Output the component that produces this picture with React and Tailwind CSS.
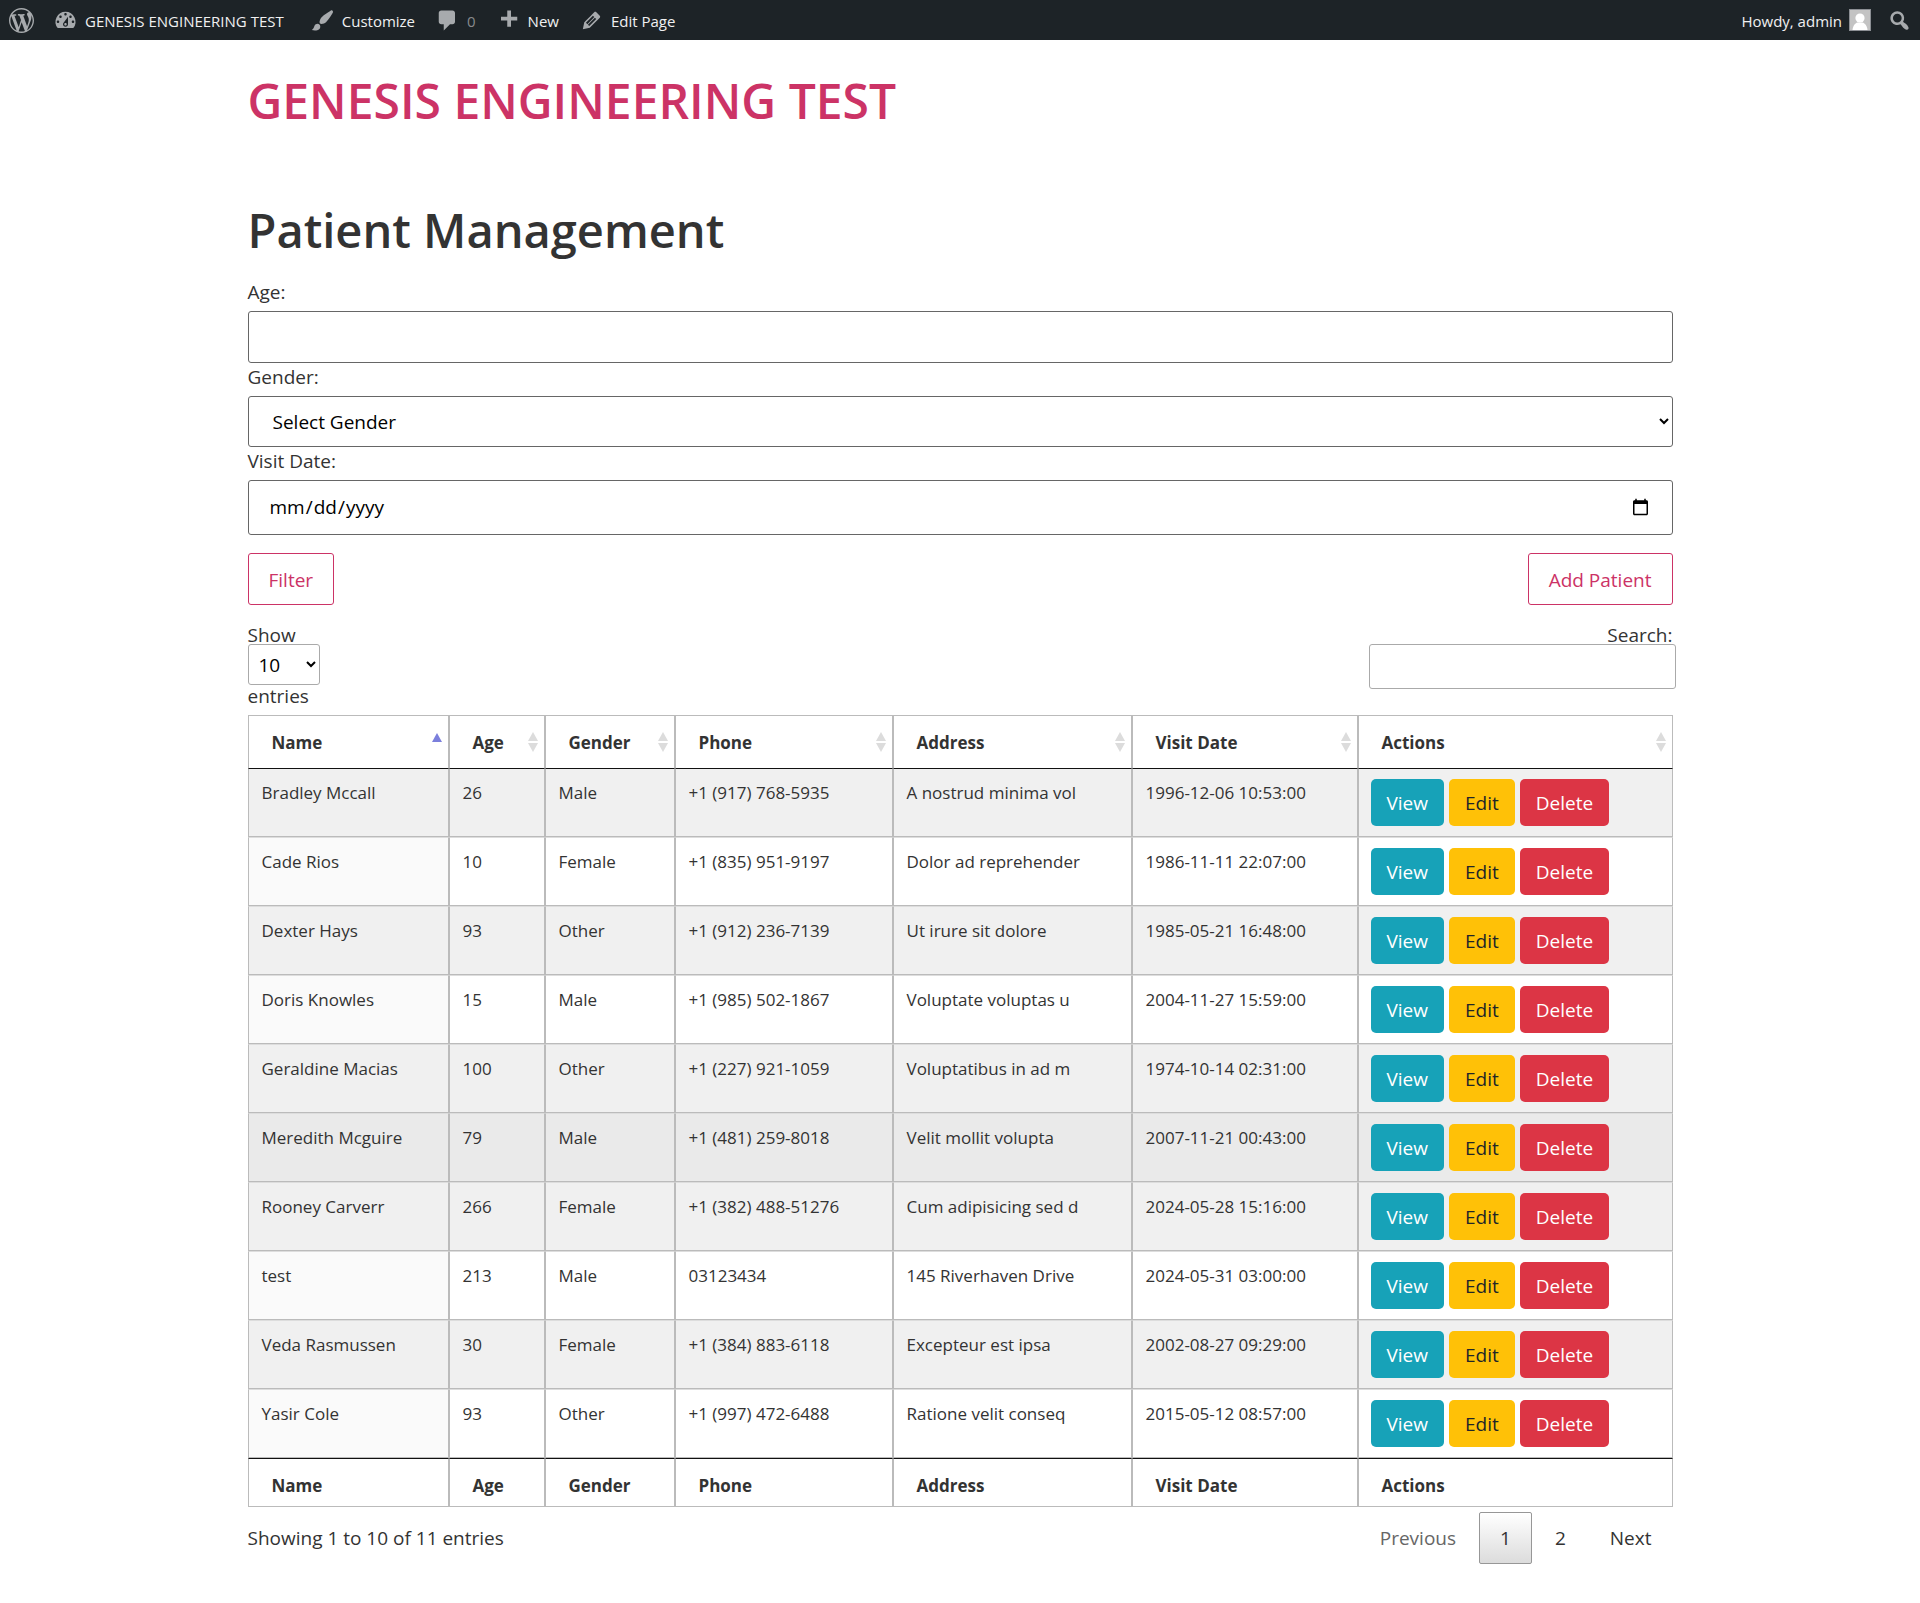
const ICONS = {
  wordpress:
    "M20 10c0-5.51-4.49-10-10-10C4.48 0 0 4.49 0 10c0 5.52 4.48 10 10 10 5.51 0 10-4.48 10-10zM7.78 15.37L4.37 6.22c.55-.02 1.17-.08 1.17-.08.5-.06.44-1.13-.06-1.11 0 0-1.45.11-2.37.11-.18 0-.37 0-.58-.01C4.12 2.69 6.87 1.11 10 1.11c2.33 0 4.45.87 6.05 2.34-.68-.11-1.65.39-1.65 1.58 0 .74.45 1.36.9 2.1.35.61.55 1.36.55 2.46 0 1.49-1.4 5-1.4 5l-3.03-8.37c.54-.02.82-.17.82-.17.5-.05.44-1.25-.06-1.22 0 0-1.44.12-2.38.12-.87 0-2.33-.12-2.33-.12-.5-.03-.56 1.2-.06 1.22l.92.08 1.26 3.41zM17.41 10c.24-.64.74-1.87.43-4.25.7 1.29 1.05 2.71 1.05 4.25 0 3.29-1.73 6.24-4.4 7.78.97-2.59 1.94-5.2 2.92-7.78zM6.1 18.09C3.12 16.65 1.11 13.53 1.11 10c0-1.3.23-2.48.72-3.59C3.25 10.3 4.67 14.2 6.1 18.09zm4.03-6.63l2.58 6.98c-.86.29-1.76.45-2.71.45-.79 0-1.57-.11-2.29-.33.81-2.38 1.62-4.74 2.42-7.1z",
  dashboard:
    "M3.76 16h12.48A7.998 7.998 0 0 0 10 3a7.998 7.998 0 0 0-6.24 13zM10 4c.55 0 1 .45 1 1s-.45 1-1 1-1-.45-1-1 .45-1 1-1zM6 6c.55 0 1 .45 1 1s-.45 1-1 1-1-.45-1-1 .45-1 1-1zm8 0c.55 0 1 .45 1 1s-.45 1-1 1-1-.45-1-1 .45-1 1-1zm-5.37 5.55L12 7v6c0 1.1-.9 2-2 2s-2-.9-2-2c0-.57.24-1.08.63-1.45zM4 10c.55 0 1 .45 1 1s-.45 1-1 1-1-.45-1-1 .45-1 1-1zm12 0c.55 0 1 .45 1 1s-.45 1-1 1-1-.45-1-1 .45-1 1-1zm-5 3c0-.55-.45-1-1-1s-1 .45-1 1 .45 1 1 1 1-.45 1-1z",
  brush:
    "M18.33 3.57s.27-.8-.31-1.36c-.53-.52-1.22-.24-1.22-.24-.61.3-5.76 3.47-7.67 5.57-.86.96-2.06 3.79-1.09 4.82.92.98 3.96-.17 4.79-1 2.06-2.06 5.21-7.17 5.5-7.79zM1.4 17.65c2.37-1.56 1.46-3.41 3.23-4.64.93-.65 2.22-.62 3.08.29.63.67.8 2.57-.16 3.46-1.57 1.45-4 1.55-6.15.89z",
  comment:
    "M5 2h9c1.1 0 2 .9 2 2v7c0 1.1-.9 2-2 2h-2l-5 5v-5H5c-1.1 0-2-.9-2-2V4c0-1.1.9-2 2-2z",
  plus: "M17 7v3h-5v5H9v-5H4V7h5V2h3v5h5z",
  edit: "M13.89 3.39l2.71 2.72c.46.46.42 1.24.03 1.64l-8.01 8.02-5.56 1.16 1.16-5.58s7.6-7.63 7.99-8.03c.39-.39 1.22-.39 1.68.07zm-2.73 2.79l-5.59 5.61 1.11 1.11 5.54-5.65zm-2.97 8.23l5.58-5.6-1.07-1.08-5.59 5.6z",
  search:
    "M12.14 4.18c1.87 1.87 2.11 4.75.72 6.89.12.1.22.21.36.31.2.16.47.36.81.59.34.24.56.39.66.47.42.31.73.57.94.78.32.32.6.65.84 1 .25.35.44.69.59 1.04.14.35.21.68.18 1-.02.32-.14.59-.36.81s-.49.34-.81.36c-.31.02-.65-.04-.99-.19-.35-.14-.7-.34-1.04-.59-.35-.24-.68-.52-1-.84-.21-.21-.47-.52-.77-.93-.1-.13-.25-.35-.47-.66-.22-.32-.4-.57-.56-.78-.16-.2-.29-.35-.44-.5-2.07 1.09-4.69.76-6.44-.98-2.14-2.15-2.14-5.64 0-7.78 2.15-2.15 5.63-2.15 7.78 0zm-1.41 6.36c1.36-1.37 1.36-3.58 0-4.95-1.37-1.37-3.59-1.37-4.95 0-1.37 1.37-1.37 3.58 0 4.95 1.36 1.37 3.58 1.37 4.95 0z",
};

const COLUMNS = ["Name", "Age", "Gender", "Phone", "Address", "Visit Date", "Actions"];

const PATIENTS = [
  ["Bradley Mccall", "26", "Male", "+1 (917) 768-5935", "A nostrud minima vol", "1996-12-06 10:53:00"],
  ["Cade Rios", "10", "Female", "+1 (835) 951-9197", "Dolor ad reprehender", "1986-11-11 22:07:00"],
  ["Dexter Hays", "93", "Other", "+1 (912) 236-7139", "Ut irure sit dolore", "1985-05-21 16:48:00"],
  ["Doris Knowles", "15", "Male", "+1 (985) 502-1867", "Voluptate voluptas u", "2004-11-27 15:59:00"],
  ["Geraldine Macias", "100", "Other", "+1 (227) 921-1059", "Voluptatibus in ad m", "1974-10-14 02:31:00"],
  ["Meredith Mcguire", "79", "Male", "+1 (481) 259-8018", "Velit mollit volupta", "2007-11-21 00:43:00"],
  ["Rooney Carverr", "266", "Female", "+1 (382) 488-51276", "Cum adipisicing sed d", "2024-05-28 15:16:00"],
  ["test", "213", "Male", "03123434", "145 Riverhaven Drive", "2024-05-31 03:00:00"],
  ["Veda Rasmussen", "30", "Female", "+1 (384) 883-6118", "Excepteur est ipsa", "2002-08-27 09:29:00"],
  ["Yasir Cole", "93", "Other", "+1 (997) 472-6488", "Ratione velit conseq", "2015-05-12 08:57:00"],
];

const ACTIVE_ROW = 5;

function Icon({ name }) {
  return (
    <svg viewBox="0 0 20 20" className="size-[25px] shrink-0 fill-[#a7aaad]" aria-hidden="true">
      <path d={ICONS[name]} />
    </svg>
  );
}

function BarLink({ icon, children, label, className = "" }) {
  return (
    <a href="#" aria-label={label} className={`flex h-10 items-center gap-[7px] ${className}`}>
      <Icon name={icon} />
      {children && <span className="pt-[2px]">{children}</span>}
    </a>
  );
}

function AdminBar() {
  return (
    <nav aria-label="Toolbar" className="flex h-10 items-center justify-between bg-[#1d2327] text-[15px] text-[#f0f0f1]">
      <div className="flex items-center">
        <BarLink icon="wordpress" label="About WordPress" className="pl-[9px] pr-[19px]" />
        <BarLink icon="dashboard" className="pr-[26px]">GENESIS ENGINEERING TEST</BarLink>
        <BarLink icon="brush" className="pr-5">Customize</BarLink>
        <BarLink icon="comment" className="pr-5">
          <span className="text-[#87898c]">0</span>
        </BarLink>
        <BarLink icon="plus" className="pr-5">New</BarLink>
        <BarLink icon="edit">Edit Page</BarLink>
      </div>
      <div className="flex items-center">
        <a href="#" className="flex h-10 items-center gap-[7px]">
          <span className="pt-[2px]">Howdy, admin</span>
          <svg viewBox="0 0 22 22" className="size-[22px]" aria-hidden="true">
            <rect x="0.5" y="0.5" width="21" height="21" fill="#c3c3c3" stroke="#8c8f94" />
            <circle cx="11" cy="9" r="4.6" fill="#fff" />
            <path d="M3.5 21c.4-4.500 2.500-6.800 5-7.600h5c2.500.8 4.600 3.100 5 7.600z" fill="#fff" />
          </svg>
        </a>
        <a href="#" aria-label="Search" className="flex h-10 items-center pl-[16px] pr-[8px]">
          <Icon name="search" />
        </a>
      </div>
    </nav>
  );
}

function SortIcon({ ascending }) {
  return (
    <svg viewBox="0 0 12 20" className="h-5 w-3 shrink-0" aria-hidden="true">
      {ascending ? (
        <path d="M1 10l5-9 5 9z" fill="#7b7fdc" />
      ) : (
        <path d="M1 9l5-9 5 9zM1 11h10l-5 9z" fill="#dcdcdc" />
      )}
    </svg>
  );
}

const FIELD = "block w-full rounded-[3px] border border-[#666] bg-white text-[19px] text-black";
const LABEL = "block pb-[5px] leading-[28px]";
const OUTLINE_BUTTON =
  "h-[52px] rounded-[3px] border border-[#cc3366] px-5 pt-[2px] text-[19px] text-[#cc3366]";
const ACTION = "h-[47px] rounded-[5px] px-4 pt-[2px] text-[19px]";
const CELL = "border-x border-[#bbb]";
const PAGE = "h-[52px] rounded-[2px] border px-5";

export default function App() {
  return (
    <div className="min-h-screen bg-white font-['Open_Sans',sans-serif] text-[19px] text-[#333]">
      <AdminBar />
      <div className="mx-auto w-full max-w-[1425px]">
        <header className="pt-[31px]">
          <a href="#" className="block text-[48px] font-semibold leading-[60px] text-[#cc3366]">
            GENESIS ENGINEERING TEST
          </a>
        </header>

        <main className="pt-[69px]">
          <h1 className="text-[47px] font-semibold leading-[60px]">Patient Management</h1>

          <form className="pt-[18px]" onSubmit={(e) => e.preventDefault()}>
            <label htmlFor="age" className={LABEL}>Age:</label>
            <input id="age" type="text" className={`${FIELD} h-[52px] px-5`} />
            <label htmlFor="gender" className={LABEL}>Gender:</label>
            <select id="gender" className={`${FIELD} h-[51px] px-5`}>
              <option>Select Gender</option>
              <option>Male</option>
              <option>Female</option>
              <option>Other</option>
            </select>
            <label htmlFor="visit-date" className={LABEL}>Visit Date:</label>
            <input id="visit-date" type="date" className={`${FIELD} h-[55px] px-5`} />
            <div className="flex justify-between pt-[18px]">
              <button type="submit" className={OUTLINE_BUTTON}>Filter</button>
              <button type="button" className={OUTLINE_BUTTON}>Add Patient</button>
            </div>
          </form>

          <div className="flex items-start justify-between pb-[7px] pt-[21px]">
            <label className="block leading-[18px]">
              Show
              <select className="block h-[41px] w-[72px] rounded-[3px] border border-[#aaa] bg-white pl-[6px] text-black">
                <option>10</option>
                <option>25</option>
                <option>50</option>
                <option>100</option>
              </select>
              <span className="block leading-[23px]">entries</span>
            </label>
            <label className="block w-[304px] text-right leading-[18px]">
              Search:
              <input type="search" className="block h-[45px] w-[307px] rounded-[3px] border border-[#aaa] bg-white px-[6px] text-black" />
            </label>
          </div>

          <table className="w-full table-fixed border-separate border-spacing-0 text-[17px]">
            <colgroup>
              <col className="w-[201px]" />
              <col className="w-[96px]" />
              <col className="w-[130px]" />
              <col className="w-[218px]" />
              <col className="w-[239px]" />
              <col className="w-[226px]" />
              <col />
            </colgroup>
            <thead>
              <tr>
                {COLUMNS.map((name, i) => (
                  <th key={name} className={`${CELL} border-b border-t border-b-[#111] p-0`}>
                    <button type="button" className="flex h-[52px] w-full items-center justify-between pl-[23px] pr-[5px] font-bold">
                      <span className="pt-[2px]">{name}</span>
                      <SortIcon ascending={i === 0} />
                    </button>
                  </th>
                ))}
              </tr>
            </thead>
            <tbody>
              {PATIENTS.map((row, r) => {
                const shade = r === ACTIVE_ROW ? "bg-[#eaeaea]" : r % 2 === 0 ? "bg-[#f0f0f0]" : "bg-white";
                const nameShade = r % 2 === 1 && r !== ACTIVE_ROW ? "bg-[#fafafa]" : "";
                const edge = r === 0 ? "" : "border-t border-t-[#ddd]";
                return (
                  <tr key={row[0]} className={shade}>
                    {row.map((value, i) => (
                      <td
                        key={i}
                        className={`${CELL} ${edge} border-b px-[13px] pt-[10px] align-top leading-[27px] ${i === 0 ? nameShade : ""}`}
                      >
                        {value}
                      </td>
                    ))}
                    <td className={`${CELL} ${edge} border-b px-3 py-[10px] align-top`}>
                      <div className="flex gap-[5px]">
                        <button type="button" className={`${ACTION} bg-[#17a2b8] text-white`}>View</button>
                        <button type="button" className={`${ACTION} bg-[#ffc107] text-[#212529]`}>Edit</button>
                        <button type="button" className={`${ACTION} bg-[#dc3545] text-white`}>Delete</button>
                      </div>
                    </td>
                  </tr>
                );
              })}
            </tbody>
            <tfoot>
              <tr>
                {COLUMNS.map((name) => (
                  <th key={name} className={`${CELL} h-[49px] border-b border-t border-t-[#111] pl-[23px] pt-[7px] text-left font-bold`}>
                    {name}
                  </th>
                ))}
              </tr>
            </tfoot>
          </table>

          <div className="flex items-center justify-between pb-10 pt-[5px]">
            <p>Showing 1 to 10 of 11 entries</p>
            <div className="flex gap-[2px]">
              <button type="button" disabled className={`${PAGE} border-transparent text-[#666]`}>Previous</button>
              <button type="button" aria-current="page" className={`${PAGE} border-[#979797] bg-linear-to-b from-white to-[#dcdcdc]`}>1</button>
              <button type="button" className={`${PAGE} border-transparent`}>2</button>
              <button type="button" className={`${PAGE} border-transparent`}>Next</button>
            </div>
          </div>
        </main>
      </div>
    </div>
  );
}
